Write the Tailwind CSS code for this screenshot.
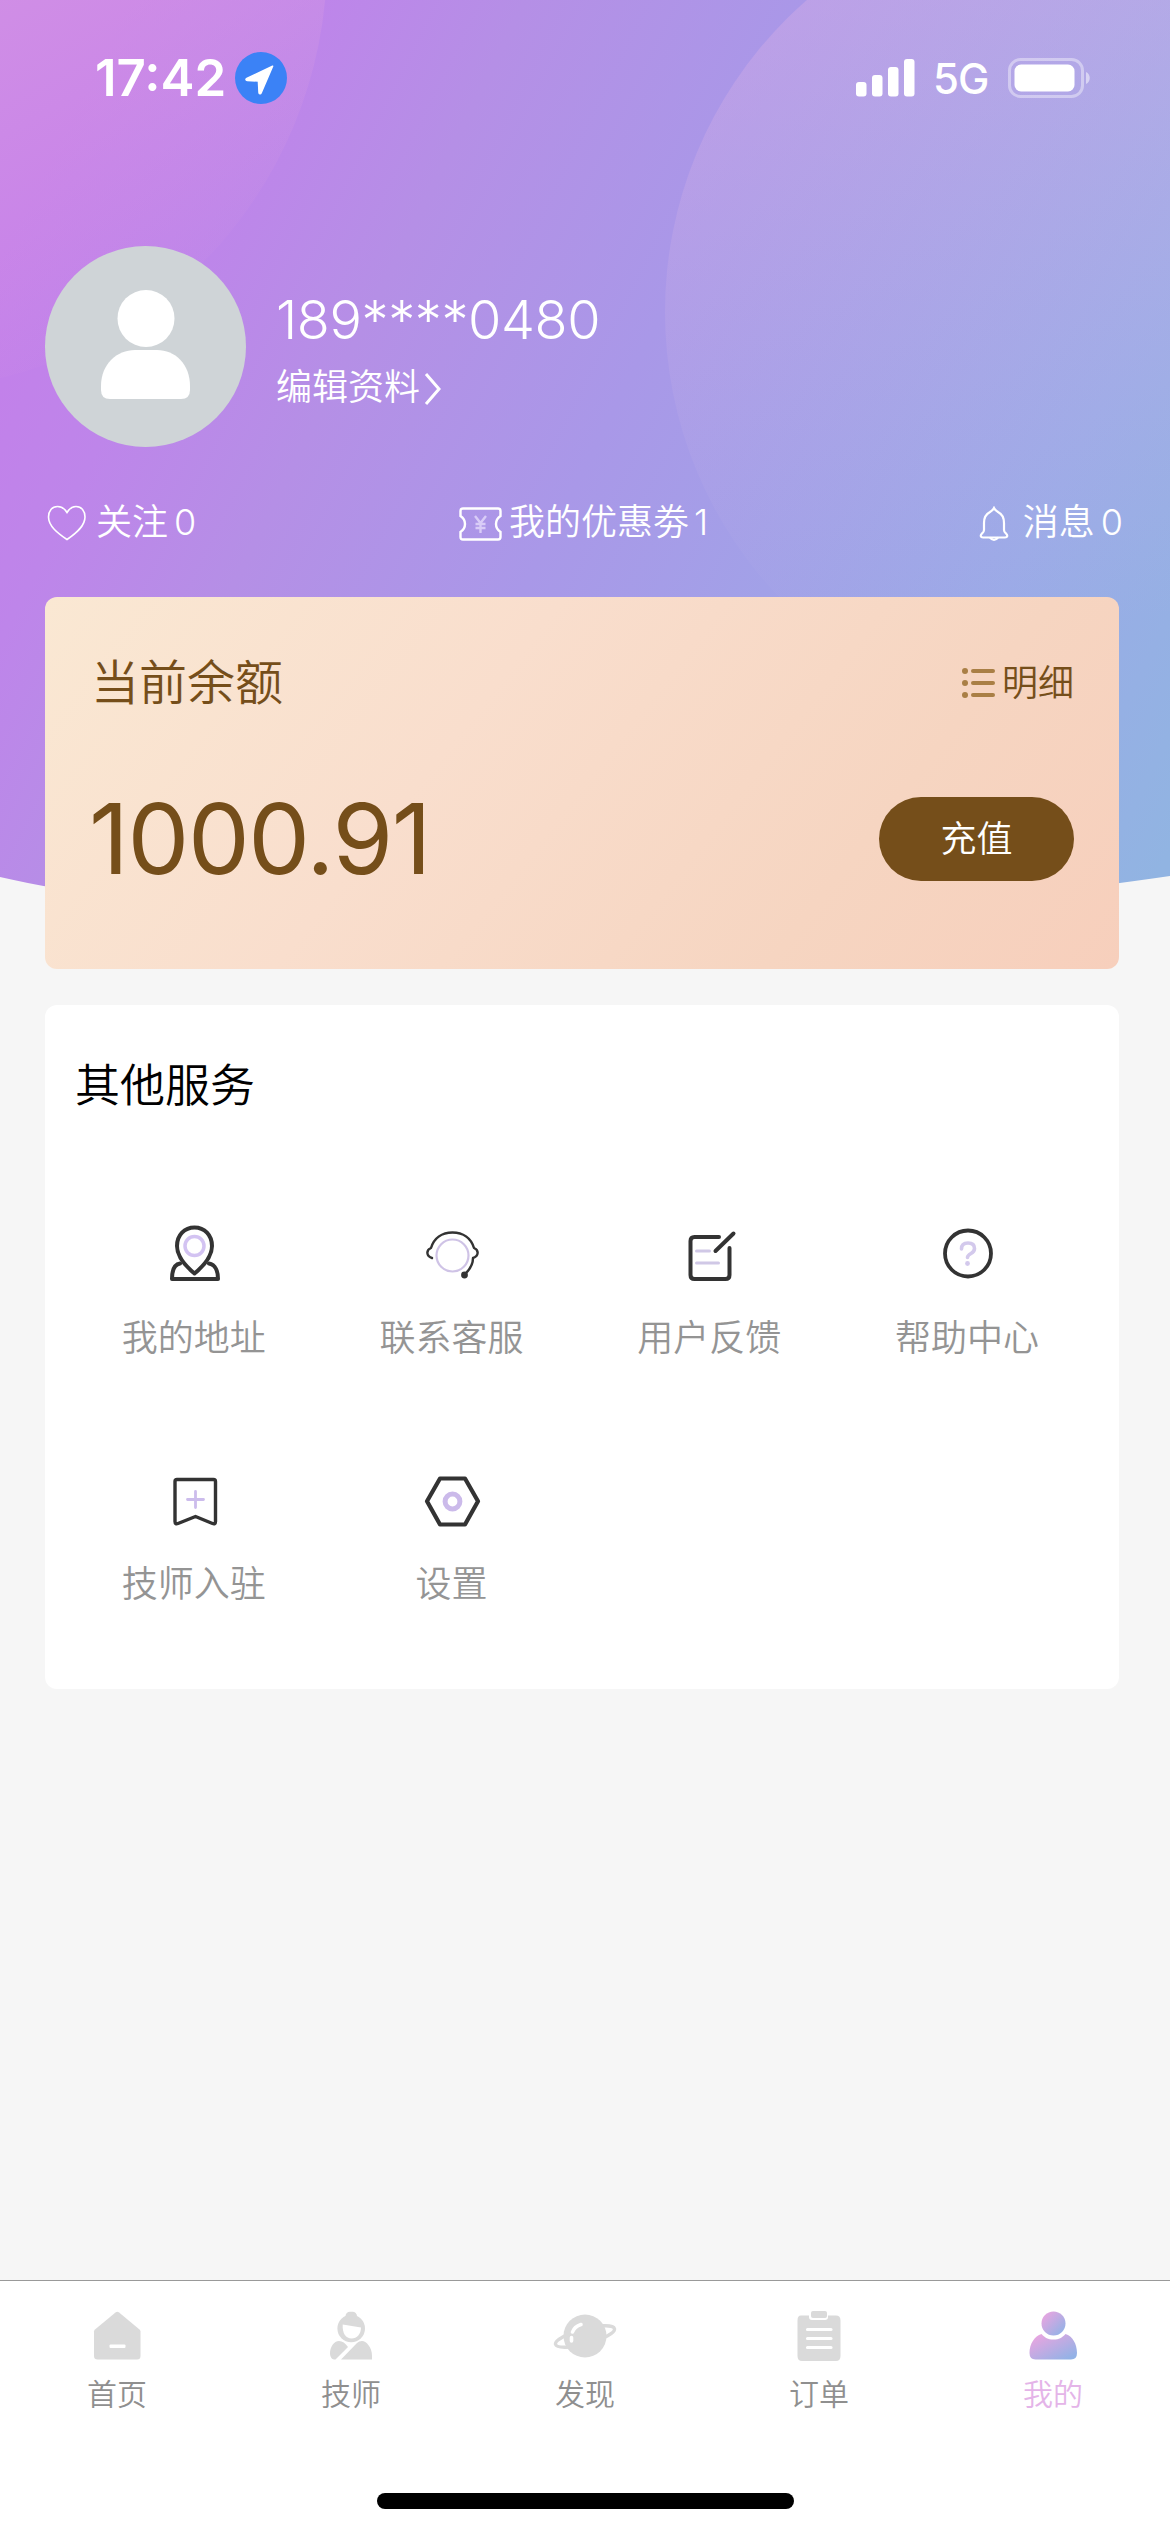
<!DOCTYPE html>
<html lang="zh-CN">
<head>
<meta charset="utf-8">
<title>我的</title>
<script src="https://cdn.jsdelivr.net/npm/@tailwindcss/browser@4"></script>
</head>
<body class="w-[1170px] h-[2532px] bg-[#f6f6f6] font-['Inter','Noto_Sans_CJK_SC',sans-serif] font-[350] overflow-hidden">
<div class="relative w-[1170px] h-[2532px] flex flex-col">

  <!-- hero backdrop -->
  <svg class="absolute left-0 top-0" width="1170" height="960" viewBox="0 0 1170 960">
    <defs>
      <linearGradient id="hero" gradientUnits="userSpaceOnUse" x1="0" y1="260" x2="1172" y2="846">
        <stop offset="0" stop-color="#c47fea"/>
        <stop offset=".13" stop-color="#be85ea"/>
        <stop offset=".27" stop-color="#b58fe6"/>
        <stop offset=".47" stop-color="#a998e8"/>
        <stop offset=".8" stop-color="#9baae7"/>
        <stop offset="1" stop-color="#91b4e2"/>
      </linearGradient>
      <linearGradient id="c1" gradientUnits="userSpaceOnUse" x1="0" y1="0" x2="180" y2="330">
        <stop offset="0" stop-color="#e0a2e0" stop-opacity=".42"/>
        <stop offset="1" stop-color="#e0a2e0" stop-opacity="0"/>
      </linearGradient>
      <linearGradient id="c2" gradientUnits="userSpaceOnUse" x1="900" y1="0" x2="960" y2="640">
        <stop offset="0" stop-color="#e0b2e6" stop-opacity=".34"/>
        <stop offset="1" stop-color="#c8c0e6" stop-opacity="0"/>
      </linearGradient>
      <clipPath id="hc"><path d="M0 0H1170V876C870 921 300 945 0 877Z"/></clipPath>
    </defs>
    <g clip-path="url(#hc)">
      <rect width="1170" height="960" fill="url(#hero)"/>
      <circle cx="-104" cy="-40" r="431" fill="url(#c1)"/>
      <circle cx="1079" cy="312" r="414" fill="url(#c2)"/>
    </g>
  </svg>

  <!-- status bar -->
  <div class="relative h-[156px] pt-[46px] pl-[95px] pr-[78px] flex items-start justify-between text-white">
    <div class="flex items-center h-16 gap-[10px]">
      <span class="text-[51px] leading-[64px] font-semibold w-[130px] whitespace-nowrap">17:42</span>
      <svg width="52" height="52" viewBox="0 0 52 52"><circle cx="26" cy="26" r="26" fill="#3b82f6"/><path d="M37.6 14.2 11.8 26.4c-1.300.6-1 2 .4 2.100l11.200.5.6 11.600c.1 1.400 1.600 1.600 2.100.4Z" fill="#fff" stroke="#fff" stroke-width="1.500" stroke-linejoin="round"/></svg>
    </div>
    <div class="flex items-center h-16">
      <svg width="59" height="38" viewBox="0 0 59 38" fill="#fff"><rect x="0" y="23" width="10.500" height="14.500" rx="3"/><rect x="16" y="16" width="10.500" height="21.500" rx="3"/><rect x="32" y="8" width="10.500" height="29.500" rx="3"/><rect x="48" y="0" width="10.500" height="37.500" rx="3"/></svg>
      <span class="ml-[18px] w-[58px] text-[42px] leading-[64px] font-medium whitespace-nowrap tracking-[-1px] pt-[2px]">5G</span>
      <svg class="ml-[17px]" width="84" height="40" viewBox="0 0 84 40"><rect x="1.500" y="1.500" width="73" height="37" rx="11" fill="none" stroke="#fff" stroke-opacity=".4" stroke-width="3"/><rect x="6.500" y="6.500" width="60" height="27" rx="6.500" fill="#fff"/><path d="M78 14c5 2 5 10 0 12Z" fill="#fff" fill-opacity=".5"/></svg>
    </div>
  </div>

  <!-- profile -->
  <div class="relative mt-[90px] ml-[45px] h-[201px] flex text-white">
    <svg width="201" height="201" viewBox="0 0 201 201"><circle cx="100.500" cy="100.500" r="100.500" fill="#cfd4d7"/><circle cx="101" cy="72.500" r="28.500" fill="#fff"/><path d="M56 140c0-22 16-36 34-36h22c18 0 33 14 33 36v4q0 9-9 9H65q-9 0-9-9Z" fill="#fff"/></svg>
    <div class="ml-[30px] pt-[38px] flex flex-col">
      <span class="text-[54px] leading-[72px] font-light whitespace-nowrap tracking-[-0.4px]">189****0480</span>
      <div class="flex items-center h-[54px] mt-[4px]">
        <span class="text-[36px] leading-[54px]">编辑资料</span>
        <svg class="ml-[4px] mt-1" width="18" height="34" viewBox="0 0 18 34" fill="none" stroke="#fff" stroke-width="3"><path d="M2 2 15 17 2 32"/></svg>
      </div>
    </div>
  </div>

  <!-- stats -->
  <div class="relative mt-[48px] pl-[47px] pr-[48px] h-[54px] flex items-center text-white text-[36px] leading-[54px]">
    <div class="flex items-center w-[412px]">
      <svg class="mt-[1px]" width="40" height="36" viewBox="0 0 40 36" fill="none" stroke="#fff" stroke-width="1.600"><path d="M20 7.500C17 2.500 13.500 1.500 10.500 1.500 5 1.500 1.500 6 1.500 12c0 9 9 16 18.500 22.500C29.500 28 38 21 38 12c0-6-3.500-10.500-9-10.500-3 0-6 1-9 6Z"/></svg>
      <span class="ml-[9px]">关注</span><span class="ml-[6px] font-light tracking-[-2px]">0</span>
    </div>
    <div class="flex items-center">
      <svg class="mt-[4px]" width="43" height="34" viewBox="0 0 43 34" fill="none" stroke="#fff" stroke-width="2.400"><path d="M4 1.500H39q2.500 0 2.500 2.500V9q-4.500 3-4.500 8t4.500 8v5q0 2.500-2.500 2.500H4Q1.500 32.500 1.500 30V25q4.500-3 4.500-8T1.500 9V4Q1.500 1.500 4 1.500Z"/><path d="M16 9l5.500 7L27 9M21.500 16V26M16.500 17h10M16.500 21h10" stroke="#d9ccf7" stroke-width="2.400"/></svg>
      <span class="ml-[7px]">我的优惠劵</span><span class="ml-[5px] font-light">1</span>
    </div>
    <div class="flex items-center ml-auto">
      <svg class="mt-[4px]" width="30" height="36" viewBox="0 0 30 36" fill="none" stroke="#fff" stroke-width="2.200"><path d="M15 2c1 2 2 2.500 4 4 4 2 6 6 6 11v7q0 2 2 3.500c2 2 1.500 4-1 4H4c-2.500 0-3-2-1-4q2-1.500 2-3.500V17c0-5 2-9 6-11 2-1.500 3-2 4-4Z"/><path d="M11 31.500q4 5 8 0"/></svg>
      <span class="ml-[14px]">消息</span><span class="ml-[6px] font-light tracking-[-1px]">0</span>
    </div>
  </div>

  <!-- balance -->
  <section class="relative mt-[48px] mx-[45px] w-[1074px] h-[372px] rounded-xl bg-[linear-gradient(128deg,#fae8d3_0%,#f9decd_38%,#f6d5c1_74%,#f7cfbc_100%)] text-[#754e1a] px-[45px]">
    <div class="flex items-center justify-between pt-[50px] h-[122px]">
      <span class="text-[48px] leading-[72px] ml-[1px]">当前余额</span>
      <div class="flex items-center">
        <svg width="33" height="32" viewBox="0 0 33 32" fill="#a97f45"><circle cx="3" cy="4" r="3"/><rect x="9" y="2" width="24" height="4" rx="2"/><circle cx="3" cy="16" r="3"/><rect x="9" y="14" width="24" height="4" rx="2"/><circle cx="3" cy="28" r="3"/><rect x="9" y="26" width="24" height="4" rx="2"/></svg>
        <span class="ml-[7px] text-[36px] leading-[54px]">明细</span>
      </div>
    </div>
    <div class="flex items-center justify-between mt-[60px] h-[120px]">
      <span class="text-[98px] leading-[120px] font-normal whitespace-nowrap tracking-[-1.4px] ml-[-1px]">1000.91</span>
      <button class="w-[195px] h-[84px] rounded-full bg-[#754e1a] text-white text-[36px] leading-[84px] font-[350]">充值</button>
    </div>
  </section>

  <!-- services -->
  <section class="relative mt-[36px] mx-[45px] w-[1074px] h-[684px] rounded-xl bg-white">
    <h2 class="pt-[47px] pl-[30px] text-[45px] leading-[68px] font-[350] text-black">其他服务</h2>
    <div class="mt-[93px] ml-[20px] mr-[23px] grid grid-cols-4 text-[36px] leading-[54px] text-[#949494]">
      <div class="flex flex-col items-center h-[246px]">
        <svg width="76" height="76" viewBox="0 0 76 76" fill="none" stroke="#333" stroke-width="4" stroke-linecap="round" stroke-linejoin="round"><path d="M38.500 60.500C27 51 21 42 21 33c0-11 7.500-18.500 17.500-18.500S56 22 56 33c0 9-6 18-17.500 27.500Z"/><path d="M24 50.500c-6 1-8 8-8 15.500h46c0-7.500-2.500-14.500-9-15.500"/><circle cx="38.500" cy="33" r="9.500" stroke="#d3c3f2" stroke-width="3.500"/></svg>
        <span class="mt-[22px]">我的地址</span>
      </div>
      <div class="flex flex-col items-center h-[246px]">
        <svg width="76" height="76" viewBox="0 0 76 76" fill="none" stroke="#333" stroke-width="2.400" stroke-linecap="round" stroke-linejoin="round"><path d="M18 45c-6-2-6-8-1-10C20 25 28 19.500 38.500 19.500S57 25 60 35c5 2 5 8-1 10 0 7-3 11-7 15"/><circle cx="50.500" cy="62" r="2.200" fill="#333"/><circle cx="38.500" cy="42.500" r="16" stroke="#cfc3e6" stroke-width="2.200"/></svg>
        <span class="mt-[22px]">联系客服</span>
      </div>
      <div class="flex flex-col items-center h-[246px]">
        <svg width="76" height="76" viewBox="0 0 76 76" fill="none" stroke="#333" stroke-width="4" stroke-linecap="round" stroke-linejoin="round"><path d="M48 24H23.500q-4 0-4 4V62q0 4 4 4H54.500q4 0 4-4V35"/><path d="M44.500 38 62.500 20.500"/><path d="M25.500 38h13M25.500 50h22" stroke="#d0c8e6" stroke-width="3"/></svg>
        <span class="mt-[22px]">用户反馈</span>
      </div>
      <div class="flex flex-col items-center h-[246px]">
        <svg width="76" height="76" viewBox="0 0 76 76" fill="none" stroke="#333" stroke-width="3.800" stroke-linecap="round" stroke-linejoin="round"><circle cx="39" cy="40.500" r="23"/><path d="M32.500 36q0-6 6.500-6t6.500 5.500q0 3-3.500 5-3.500 2-3.500 4" stroke="#d3c9ec" stroke-width="3.600"/><circle cx="38.500" cy="50.500" r="2.400" fill="#d3c9ec" stroke="none"/></svg>
        <span class="mt-[22px]">帮助中心</span>
      </div>
      <div class="flex flex-col items-center h-[246px]">
        <svg width="76" height="76" viewBox="0 0 76 76" fill="none" stroke="#333" stroke-width="3.400" stroke-linecap="round" stroke-linejoin="round"><path d="M21 20.500H57.500q2 0 2 2V62.500q0 3-3 2L39.500 57.500 22 64.500q-3 1-3-2V22.500q0-2 2-2Z"/><path d="M39.500 32.500V48.500M31.500 40.500h16" stroke="#ccbcec" stroke-width="2.800"/></svg>
        <span class="mt-[22px]">技师入驻</span>
      </div>
      <div class="flex flex-col items-center h-[246px]">
        <svg width="76" height="76" viewBox="0 0 76 76" fill="none" stroke="#333" stroke-width="4.200" stroke-linecap="round" stroke-linejoin="round"><path d="M26 19.500H51L64 42.200 51 65.500H26L13 42.200Z"/><circle cx="38.500" cy="42.500" r="7.400" stroke="#cbbaea" stroke-width="5"/></svg>
        <span class="mt-[22px]">设置</span>
      </div>
    </div>
  </section>

  <!-- tab bar -->
  <nav class="relative mt-auto h-[252px] bg-white border-t border-[#999] grid grid-cols-5 text-[30px] leading-[44px] text-[#8f8f8f]">
    <div class="flex flex-col items-center pt-[28px]">
      <svg width="64" height="56" viewBox="0 0 64 56"><path d="M30.500 3.500q1.800-1.300 3.600 0L54.500 20.500q1 1 1 2V47q0 3.500-3.500 3.500H12.500Q9 50.500 9 47V22.500q0-1 1-2Z" fill="#dadada"/><rect x="24.500" y="35.500" width="16" height="3.500" rx="1" fill="#fff"/></svg>
      <span class="mt-[7px]">首页</span>
    </div>
    <div class="flex flex-col items-center pt-[28px]">
      <svg width="64" height="56" viewBox="0 0 64 56" fill="#dadada"><rect x="26.500" y="2.700" width="11.500" height="10" rx="4.500"/><circle cx="32.200" cy="19.500" r="13.800"/><path d="M23.700 15.500 42 18.500c0 6.500-4 11-9.500 11s-9.300-5-8.800-14Z" fill="#fff"/><path d="M20 32c-5 0-9 6-9 12.500 0 3 2 6 4 6h1.500L29 38Q25 32 20 32ZM22 50.500H53V47c0-9-6-15-10-15q-3 0-5 2Z"/></svg>
      <span class="mt-[7px]">技师</span>
    </div>
    <div class="flex flex-col items-center pt-[28px]">
      <svg width="64" height="56" viewBox="0 0 64 56"><ellipse cx="32" cy="27.500" rx="30.500" ry="7.500" transform="rotate(-15 32 27.500)" fill="none" stroke="#dadada" stroke-width="3.400"/><circle cx="32" cy="27" r="21.500" fill="#dadada"/><path d="M19.500 23q2-5.500 8.500-7.500M18.500 32v-3.500" fill="none" stroke="#fff" stroke-width="3.600" stroke-linecap="round"/></svg>
      <span class="mt-[7px]">发现</span>
    </div>
    <div class="flex flex-col items-center pt-[28px]">
      <svg width="64" height="56" viewBox="0 0 64 56" fill="#dadada"><path d="M14 6.500h8v1.500q0 3 3 3H38q3 0 3-3V6.500h8q4.500 0 4.500 5V47q0 5-4.500 5H15q-4.500 0-4.500-5V11.500q0-5 3.500-5Z"/><rect x="24" y="2" width="16" height="7" rx="2"/><path d="M20.500 20.500H44M20.500 29.500H44M20.500 38.500H44" stroke="#fff" stroke-width="3.200" stroke-linecap="round"/></svg>
      <span class="mt-[7px]">订单</span>
    </div>
    <div class="flex flex-col items-center pt-[28px] text-[#e4b4e8]">
      <svg width="64" height="56" viewBox="0 0 64 56"><defs><linearGradient id="me" x1="0" y1="0" x2="1" y2="1"><stop offset=".1" stop-color="#e8a5e0"/><stop offset=".9" stop-color="#93b2e6"/></linearGradient></defs><circle cx="32.500" cy="14.500" r="12" fill="url(#me)"/><path d="M20.500 25c4 4 6 5.500 12 5.500s8-1.500 12-5.500c7 2 11.500 10 11.500 19q0 6.500-6 6.500H14.500q-6 0-6-6.500c0-9 5-17 12-19Z" fill="url(#me)"/></svg>
      <span class="mt-[7px]">我的</span>
    </div>
    <div class="absolute left-[377px] top-[212px] w-[417px] h-[16px] rounded-full bg-black"></div>
  </nav>
</div>
</body>
</html>
